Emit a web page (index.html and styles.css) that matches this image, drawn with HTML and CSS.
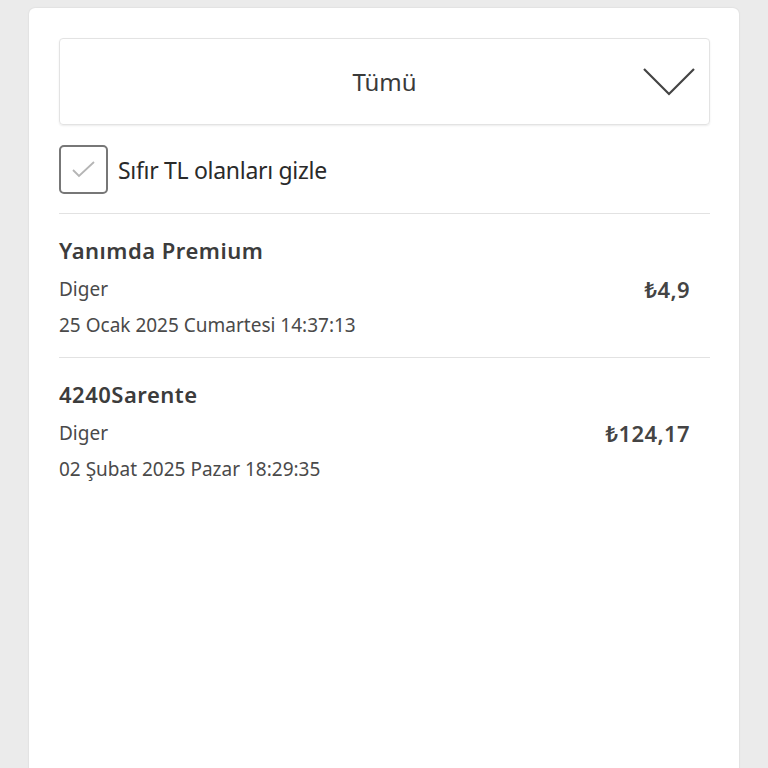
FILE: index.html
```html
<!DOCTYPE html>
<html lang="tr">

<head>
  <meta charset="UTF-8" />
  <meta name="viewport" content="width=device-width, initial-scale=1.0" />
  <title>İşlemler</title>
  <link rel="stylesheet" href="styles.css">
</head>

<body>
  <div class="panel">
    <div class="select-box">
      <span class="select-text">Tümü</span>
      <svg class="chevron" width="52" height="30" viewBox="0 0 52 30">
        <polyline points="1,2 26,27 51,2" fill="none" stroke="#444" stroke-width="2.2" />
      </svg>
    </div>

    <label class="check-row">
      <span class="check-box">
        <svg width="28" height="20" viewBox="0 0 28 20">
          <polyline points="3,10 9,16 24,2" fill="none" stroke="#b5b5b5" stroke-width="1.8" />
        </svg>
      </span>
      <span class="check-label">Sıfır TL olanları gizle</span>
    </label>

    <div class="tx-list">
      <div class="tx">
        <div class="tx-title">Yanımda Premium</div>
        <div class="tx-type">Diger</div>
        <div class="tx-date">25 Ocak 2025 Cumartesi 14:37:13</div>
        <div class="tx-amount">₺4,9</div>
      </div>
      <div class="tx">
        <div class="tx-title">4240Sarente</div>
        <div class="tx-type">Diger</div>
        <div class="tx-date">02 Şubat 2025 Pazar 18:29:35</div>
        <div class="tx-amount">₺124,17</div>
      </div>
    </div>
  </div>
</body>

</html>
```

FILE: styles.css
```css
body {
  font-family: "Noto Sans", Arial, sans-serif;
  background-color: #ebebeb;
  color: #333;
  margin: 0;
  padding: 8px 29px 0;
}

.panel {
  background: #fff;
  border-radius: 6px 6px 0 0;
  min-height: 760px;
  padding: 30px 29px 0 30px;
  box-shadow: 0 0 2px rgba(0, 0, 0, 0.12);
}

.select-box {
  height: 85px;
  border: 1px solid #e3e3e3;
  border-radius: 4px;
  box-shadow: 0 1px 2px rgba(0, 0, 0, 0.08);
  display: flex;
  align-items: center;
  justify-content: center;
  position: relative;
}

.select-text {
  font-size: 24px;
  color: #3a3a3a;
}

.chevron {
  position: absolute;
  right: 14px;
  top: 28px;
}

.check-row {
  display: flex;
  align-items: center;
  gap: 10px;
  margin-top: 20px;
}

.check-box {
  width: 45px;
  height: 45px;
  border: 2px solid #777;
  border-radius: 5px;
  display: flex;
  align-items: center;
  justify-content: center;
}

.check-label {
  font-size: 23px;
  color: #2a2a2a;
  letter-spacing: -0.3px;
}

.tx-list {
  margin-top: 19px;
  border-top: 1px solid #e2e2e2;
}

.tx {
  display: grid;
  grid-template-columns: 1fr auto;
  padding: 22px 20px 14px 0;
  border-bottom: 1px solid #e2e2e2;
}

.tx-title {
  grid-column: 1;
  font-size: 22px;
  font-weight: 600;
  line-height: 28px;
  letter-spacing: 0.5px;
  color: #3c3c3c;
}

.tx-type,
.tx-date {
  grid-column: 1;
  font-size: 19px;
  line-height: 36px;
  color: #4a4a4a;
}

.tx-type {
  margin-top: 7px;
}

.tx-amount {
  grid-column: 2;
  grid-row: 2;
  margin-top: 7px;
  align-self: center;
  font-size: 22px;
  font-weight: 600;
  letter-spacing: 0.4px;
  color: #444;
}

.tx:last-child {
  border-bottom: none;
}
```
